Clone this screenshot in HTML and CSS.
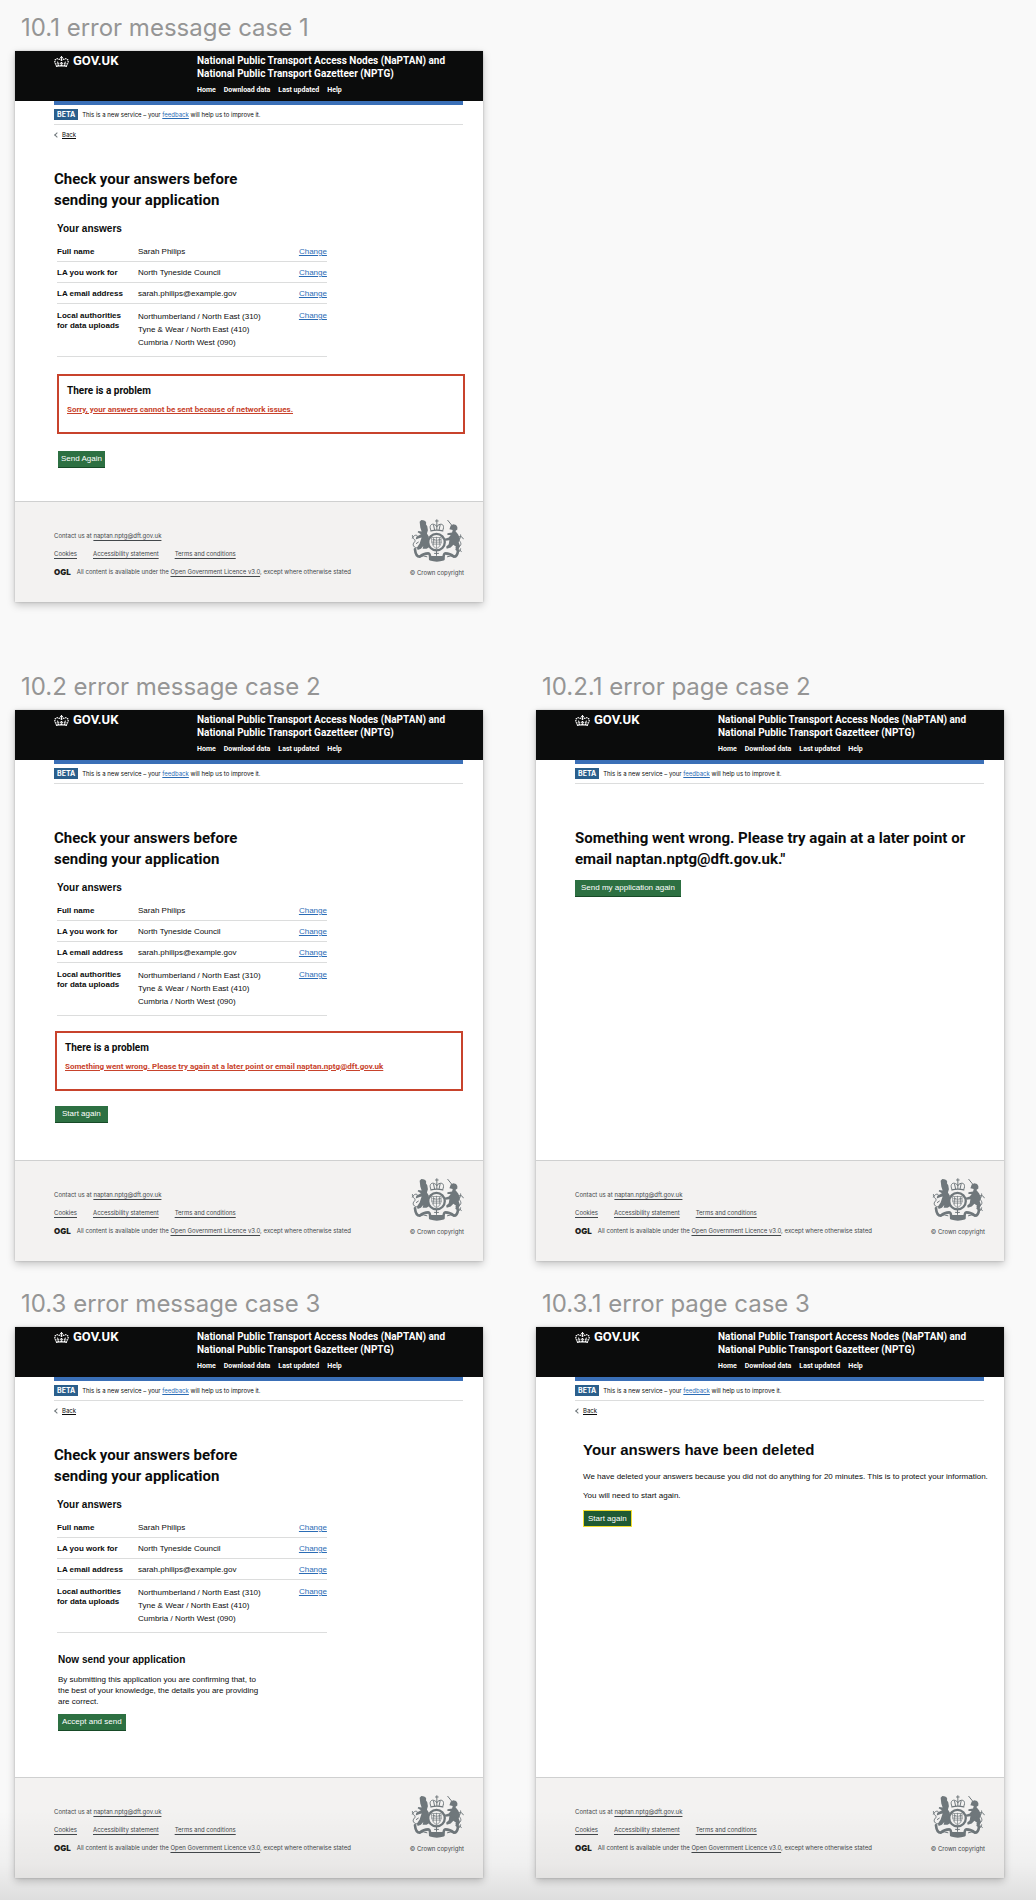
FILE: index.html
```html
<!DOCTYPE html>
<html lang="en">

<head>
    <meta charset="UTF-8">
    <meta name="viewport" content="width=device-width, initial-scale=1.0">
    <title>Error messages</title>
    <link rel="stylesheet" href="styles.css">
</head>

<body>
    <!-- shared icons -->
    <svg class="sprite" aria-hidden="true">
        <symbol id="crown" viewBox="0 0 132 97">
            <path fill="currentColor" fill-rule="evenodd" d="M25 30.2c3.5 1.5 7.7-.2 9.1-3.7 1.5-3.6-.2-7.8-3.9-9.2-3.6-1.4-7.6.3-9.1 3.9-1.4 3.5.3 7.5 3.9 9zM9 39.5c3.6 1.5 7.8-.2 9.2-3.7 1.5-3.6-.2-7.8-3.9-9.1-3.6-1.5-7.6.2-9.1 3.8-1.4 3.5.3 7.5 3.8 9zM4.4 57.2c3.5 1.5 7.7-.2 9.1-3.8 1.5-3.6-.2-7.7-3.9-9.1-3.5-1.5-7.6.3-9.1 3.8-1.4 3.5.3 7.6 3.9 9.1zm38.3-21.4c3.5 1.5 7.7-.2 9.1-3.8 1.5-3.6-.2-7.7-3.9-9.1-3.6-1.5-7.6.3-9.1 3.8-1.3 3.6.4 7.7 3.9 9.1zm64.4-5.6c-3.6 1.5-7.8-.2-9.1-3.7-1.5-3.6.2-7.8 3.8-9.2 3.6-1.4 7.7.3 9.2 3.9 1.3 3.5-.4 7.5-3.9 9zm15.9 9.3c-3.6 1.5-7.7-.2-9.1-3.7-1.5-3.6.2-7.8 3.7-9.1 3.6-1.5 7.7.2 9.2 3.8 1.5 3.5-.3 7.5-3.8 9zm4.7 17.7c-3.6 1.5-7.8-.2-9.2-3.8-1.5-3.6.2-7.7 3.9-9.1 3.6-1.5 7.7.3 9.2 3.8 1.3 3.5-.4 7.6-3.9 9.1zM89.3 35.8c-3.6 1.5-7.8-.2-9.2-3.8-1.4-3.6.2-7.7 3.9-9.1 3.6-1.5 7.7.3 9.2 3.8 1.4 3.6-.3 7.7-3.9 9.1zM69.7 17.7l8.9 4.7V9.3l-8.9 2.8c-.2-.3-.5-.6-.9-.9L72.4 0H59.6l3.5 11.2c-.3.3-.6.5-.9.9l-8.8-2.8v13.1l8.8-4.7c.3.3.6.7.9.9l-5 15.4v.1c-.2.8-.4 1.6-.4 2.4 0 4.1 3.1 7.5 7 8.1h.2c.3 0 .7.1 1 .1.4 0 .7 0 1-.1h.2c4-.6 7.1-4.1 7.1-8.1 0-.8-.1-1.7-.4-2.4V34l-5.1-15.4c.4-.2.7-.6 1-.9zM66 92.8c16.9 0 32.8 1.1 47.1 3.2 4-16.9 8.9-26.7 14-33.5l-9.6-3.4c1 4.9 1.1 7.2 0 10.2-1.5-1.4-3-4.3-4.2-8.7L108.6 76c2.8-2 5-3.2 7.5-3.3-4.4 9.4-10 11.9-13.6 11.2-4.3-.8-6.3-4.6-5.6-7.9 1-4.7 5.7-5.9 8-.5 4.3-8.7-3-11.4-7.6-8.8 7.1-7.2 7.9-13.5 2.1-21.1-8 6.1-8.1 12.3-4.5 20.8-4.7-5.4-12.1-2.5-9.5 6.2 3.4-5.2 7.9-2 7.2 3.1-.6 4.3-6.4 7.8-13.5 7.2-10.3-.9-10.9-8-11.2-13.8 2.5-.5 7.1 1.8 11 7.3L80.2 60c-4.1 4.4-8 5.3-12.3 5.4 1.4-4.4 8-11.6 8-11.6H55.5s6.4 7.2 7.9 11.6c-4.2-.1-8-1-12.3-5.4l1.4 16.4c3.9-5.5 8.5-7.7 10.9-7.3-.3 5.8-.9 12.8-11.1 13.8-7.2.6-12.9-2.9-13.5-7.2-.7-5 3.8-8.3 7.1-3.1 2.7-8.7-4.6-11.6-9.4-6.2 3.7-8.5 3.6-14.7-4.6-20.8-5.8 7.6-5 13.9 2.2 21.1-4.7-2.6-11.9.1-7.7 8.8 2.3-5.5 7.1-4.2 8.1.5.7 3.3-1.3 7.1-5.7 7.9-3.5.7-9-1.8-13.5-11.2 2.5.1 4.7 1.3 7.5 3.3l-4.7-15.4c-1.2 4.4-2.7 7.2-4.3 8.7-1.1-3-.9-5.3 0-10.2l-9.5 3.4c5 6.9 9.9 16.7 14 33.5 14.8-2.1 30.8-3.2 47.7-3.2z" />
        </symbol>
        <symbol id="crest" viewBox="0 0 160 130">
            <g fill="none" stroke="#6f777b" stroke-linecap="round">
                <!-- crown -->
                <path stroke-width="3" d="M78 2v10M74 6h8M60 34c-6-12 0-20 8-18 5 1 9 4 10 8 1-4 5-7 10-8 8-2 14 6 8 18M68 18l3 14M88 18l-3 14M78 14v18" />
                <path stroke-width="4" d="M60 36q18-5 36 0" />
                <!-- garter and shield -->
                <circle cx="77" cy="70" r="25" stroke-width="7" />
                <path stroke-width="2" d="M63 56h28v16q-2 12-14 18q-12-6-14-18zM77 55v34M63 70h28M68 58v20M72 62h-6M84 62h5M86 58v20M68 64h20M70 76h14" />
                <!-- lion tail -->
                <path stroke-width="3" d="M22 88c-14 0-20-10-12-18 8-7-8-10-6-20M4 58c4-10 14-12 16-6M16 74l6-4" />
                <!-- unicorn tail and chain -->
                <path stroke-width="3" d="M136 86c14 0 18-10 12-18-6-6 4-10 2-20M158 60c-6-10-12-10-14-4M138 96c6 6 12 2 12-6M144 92l8 6" />
                <!-- horn -->
                <path stroke-width="3" d="M111 4l13 16" />
                <!-- ribbon -->
                <path stroke-width="8" stroke-linejoin="round" d="M12 92q2 22 14 22q12-10 26-10q6 0 6 18q20 6 40 0q0-18 6-18q14 0 26 10q10 0 12-18" />
                <path stroke-width="3" d="M26 112q12-2 22 2M132 112q-12-2-22 2M77 98v12M71 104h12" />
            </g>
            <g fill="#6f777b">
                <path d="M26 8l5-5 6 1 6 2 3 5-1 5 4 6 2 12-3 10 6 10-3 16 6 14-10 6-12 0 2-8-7 8-10 4-2-8 8-12 6-18-8 2-10 4 2-8 14-8-10-6 2-4 10 2-4-12z" />
                <path d="M120 20l8-4 8 2 4 6 0 8-6 4 8 10 6 12-4 12 4 12-6 14-8-2 2-10-8-6-8 8-12 4-2-6 8-8 2-12-12 2-2-6 12-4 6-8-10 0 0-5 14-2 2-8-10-2z" />
                <path d="M56 112h42v10q-21 8-42 0z" />
            </g>
        </symbol>
    </svg>

    <div class="board">
        <div class="row">
            <section>
                <h2 class="frameTitle">10.1 error message case 1</h2>
                <div class="card">
                    <header class="top">
                        <a href="#" class="logo"><svg class="crown"><use href="#crown" /></svg>GOV.UK</a>
                        <div>
                            <p class="service">National Public Transport Access Nodes (NaPTAN) and<br>National Public Transport Gazetteer (NPTG)</p>
                            <nav class="nav"><a href="#">Home</a><a href="#">Download data</a><a href="#">Last updated</a><a href="#">Help</a></nav>
                        </div>
                    </header>
                    <div class="phase"><strong class="tag">BETA</strong><span>This is a new service – your <a href="#">feedback</a> will help us to improve it.</span></div>
                    <div class="backRow"><a href="#" class="back">Back</a></div>
                    <main class="content">
                        <h1>Check your answers before<br>sending your application</h1>
                        <h3 class="subTitle">Your answers</h3>
                        <table class="answers">
                            <tr><th scope="row">Full name</th><td>Sarah Philips</td><td><a href="#">Change</a></td></tr>
                            <tr><th scope="row">LA you work for</th><td>North Tyneside Council</td><td><a href="#">Change</a></td></tr>
                            <tr><th scope="row">LA email address</th><td>sarah.philips@example.gov</td><td><a href="#">Change</a></td></tr>
                            <tr class="areas"><th scope="row">Local authorities<br>for data uploads</th><td>Northumberland / North East (310)<br>Tyne &amp; Wear / North East (410)<br>Cumbria / North West (090)</td><td><a href="#">Change</a></td></tr>
                        </table>
                        <div class="problem problemWide">
                            <h3>There is a problem</h3>
                            <a href="#">Sorry, your answers cannot be sent because of network issues.</a>
                        </div>
                        <button type="button" class="btn btnSend">Send Again</button>
                    </main>
                    <footer class="bottom">
                        <div class="links">
                            <p>Contact us at <a href="#">naptan.nptg@dft.gov.uk</a></p>
                            <p class="linkList"><a href="#">Cookies</a><a href="#">Accessibility statement</a><a href="#">Terms and conditions</a></p>
                            <p class="licence"><b class="ogl">OGL</b><span>All content is available under the <a href="#">Open Government Licence v3.0</a>, except where otherwise stated</span></p>
                        </div>
                        <div class="copyright"><svg class="crest"><use href="#crest" /></svg>© Crown copyright</div>
                    </footer>
                </div>
            </section>
        </div>

        <div class="row rowSecond">
            <section>
                <h2 class="frameTitle">10.2 error message case 2</h2>
                <div class="card">
                    <header class="top">
                        <a href="#" class="logo"><svg class="crown"><use href="#crown" /></svg>GOV.UK</a>
                        <div>
                            <p class="service">National Public Transport Access Nodes (NaPTAN) and<br>National Public Transport Gazetteer (NPTG)</p>
                            <nav class="nav"><a href="#">Home</a><a href="#">Download data</a><a href="#">Last updated</a><a href="#">Help</a></nav>
                        </div>
                    </header>
                    <div class="phase"><strong class="tag">BETA</strong><span>This is a new service – your <a href="#">feedback</a> will help us to improve it.</span></div>
                    <div class="backRow"></div>
                    <main class="content">
                        <h1>Check your answers before<br>sending your application</h1>
                        <h3 class="subTitle">Your answers</h3>
                        <table class="answers">
                            <tr><th scope="row">Full name</th><td>Sarah Philips</td><td><a href="#">Change</a></td></tr>
                            <tr><th scope="row">LA you work for</th><td>North Tyneside Council</td><td><a href="#">Change</a></td></tr>
                            <tr><th scope="row">LA email address</th><td>sarah.philips@example.gov</td><td><a href="#">Change</a></td></tr>
                            <tr class="areas"><th scope="row">Local authorities<br>for data uploads</th><td>Northumberland / North East (310)<br>Tyne &amp; Wear / North East (410)<br>Cumbria / North West (090)</td><td><a href="#">Change</a></td></tr>
                        </table>
                        <div class="problem">
                            <h3>There is a problem</h3>
                            <a href="#">Something went wrong. Please try again at a later point or email naptan.nptg@dft.gov.uk</a>
                        </div>
                        <button type="button" class="btn btnStart">Start again</button>
                    </main>
                    <footer class="bottom">
                        <div class="links">
                            <p>Contact us at <a href="#">naptan.nptg@dft.gov.uk</a></p>
                            <p class="linkList"><a href="#">Cookies</a><a href="#">Accessibility statement</a><a href="#">Terms and conditions</a></p>
                            <p class="licence"><b class="ogl">OGL</b><span>All content is available under the <a href="#">Open Government Licence v3.0</a>, except where otherwise stated</span></p>
                        </div>
                        <div class="copyright"><svg class="crest"><use href="#crest" /></svg>© Crown copyright</div>
                    </footer>
                </div>
            </section>
            <section>
                <h2 class="frameTitle">10.2.1 error page case 2</h2>
                <div class="card">
                    <header class="top">
                        <a href="#" class="logo"><svg class="crown"><use href="#crown" /></svg>GOV.UK</a>
                        <div>
                            <p class="service">National Public Transport Access Nodes (NaPTAN) and<br>National Public Transport Gazetteer (NPTG)</p>
                            <nav class="nav"><a href="#">Home</a><a href="#">Download data</a><a href="#">Last updated</a><a href="#">Help</a></nav>
                        </div>
                    </header>
                    <div class="phase"><strong class="tag">BETA</strong><span>This is a new service – your <a href="#">feedback</a> will help us to improve it.</span></div>
                    <div class="backRow"></div>
                    <main class="content">
                        <h1>Something went wrong. Please try again at a later point or<br>email naptan.nptg@dft.gov.uk."</h1>
                        <button type="button" class="btn btnResend">Send my application again</button>
                    </main>
                    <footer class="bottom">
                        <div class="links">
                            <p>Contact us at <a href="#">naptan.nptg@dft.gov.uk</a></p>
                            <p class="linkList"><a href="#">Cookies</a><a href="#">Accessibility statement</a><a href="#">Terms and conditions</a></p>
                            <p class="licence"><b class="ogl">OGL</b><span>All content is available under the <a href="#">Open Government Licence v3.0</a>, except where otherwise stated</span></p>
                        </div>
                        <div class="copyright"><svg class="crest"><use href="#crest" /></svg>© Crown copyright</div>
                    </footer>
                </div>
            </section>
        </div>

        <div class="row rowThird">
            <section>
                <h2 class="frameTitle">10.3 error message case 3</h2>
                <div class="card">
                    <header class="top">
                        <a href="#" class="logo"><svg class="crown"><use href="#crown" /></svg>GOV.UK</a>
                        <div>
                            <p class="service">National Public Transport Access Nodes (NaPTAN) and<br>National Public Transport Gazetteer (NPTG)</p>
                            <nav class="nav"><a href="#">Home</a><a href="#">Download data</a><a href="#">Last updated</a><a href="#">Help</a></nav>
                        </div>
                    </header>
                    <div class="phase"><strong class="tag">BETA</strong><span>This is a new service – your <a href="#">feedback</a> will help us to improve it.</span></div>
                    <div class="backRow"><a href="#" class="back">Back</a></div>
                    <main class="content">
                        <h1>Check your answers before<br>sending your application</h1>
                        <h3 class="subTitle">Your answers</h3>
                        <table class="answers">
                            <tr><th scope="row">Full name</th><td>Sarah Philips</td><td><a href="#">Change</a></td></tr>
                            <tr><th scope="row">LA you work for</th><td>North Tyneside Council</td><td><a href="#">Change</a></td></tr>
                            <tr><th scope="row">LA email address</th><td>sarah.philips@example.gov</td><td><a href="#">Change</a></td></tr>
                            <tr class="areas"><th scope="row">Local authorities<br>for data uploads</th><td>Northumberland / North East (310)<br>Tyne &amp; Wear / North East (410)<br>Cumbria / North West (090)</td><td><a href="#">Change</a></td></tr>
                        </table>
                        <div class="confirm">
                            <h3>Now send your application</h3>
                            <p>By submitting this application you are confirming that, to<br>the best of your knowledge, the details you are providing<br>are correct.</p>
                            <button type="button" class="btn">Accept and send</button>
                        </div>
                    </main>
                    <footer class="bottom">
                        <div class="links">
                            <p>Contact us at <a href="#">naptan.nptg@dft.gov.uk</a></p>
                            <p class="linkList"><a href="#">Cookies</a><a href="#">Accessibility statement</a><a href="#">Terms and conditions</a></p>
                            <p class="licence"><b class="ogl">OGL</b><span>All content is available under the <a href="#">Open Government Licence v3.0</a>, except where otherwise stated</span></p>
                        </div>
                        <div class="copyright"><svg class="crest"><use href="#crest" /></svg>© Crown copyright</div>
                    </footer>
                </div>
            </section>
            <section>
                <h2 class="frameTitle">10.3.1 error page case 3</h2>
                <div class="card">
                    <header class="top">
                        <a href="#" class="logo"><svg class="crown"><use href="#crown" /></svg>GOV.UK</a>
                        <div>
                            <p class="service">National Public Transport Access Nodes (NaPTAN) and<br>National Public Transport Gazetteer (NPTG)</p>
                            <nav class="nav"><a href="#">Home</a><a href="#">Download data</a><a href="#">Last updated</a><a href="#">Help</a></nav>
                        </div>
                    </header>
                    <div class="phase"><strong class="tag">BETA</strong><span>This is a new service – your <a href="#">feedback</a> will help us to improve it.</span></div>
                    <div class="backRow"><a href="#" class="back">Back</a></div>
                    <main class="content deleted">
                        <h1>Your answers have been deleted</h1>
                        <p>We have deleted your answers because you did not do anything for 20 minutes. This is to protect your information.</p>
                        <p>You will need to start again.</p>
                        <button type="button" class="btn btnFocus">Start again</button>
                    </main>
                    <footer class="bottom">
                        <div class="links">
                            <p>Contact us at <a href="#">naptan.nptg@dft.gov.uk</a></p>
                            <p class="linkList"><a href="#">Cookies</a><a href="#">Accessibility statement</a><a href="#">Terms and conditions</a></p>
                            <p class="licence"><b class="ogl">OGL</b><span>All content is available under the <a href="#">Open Government Licence v3.0</a>, except where otherwise stated</span></p>
                        </div>
                        <div class="copyright"><svg class="crest"><use href="#crest" /></svg>© Crown copyright</div>
                    </footer>
                </div>
            </section>
        </div>
    </div>
</body>

</html>
```
FILE: styles.css
```css
* {
    box-sizing: border-box;
    margin: 0;
    padding: 0;
}

body {
    background-color: #f9f9f9;
    font: 8px/10px "Liberation Sans", Arial, sans-serif;
    color: #0b0c0c;
}

.sprite {
    display: none;
}

/* -------------------- board -------------------- */
.board {
    position: relative;
    padding: 0 32px 22px 15px;
}

/* fade at the bottom edge, over the cards */
.board::after {
    content: '';
    position: absolute;
    left: 0;
    right: 0;
    bottom: 0;
    height: 90px;
    background: linear-gradient(rgba(0, 0, 0, 0), rgba(0, 0, 0, .04) 60%, rgba(0, 0, 0, .11));
    pointer-events: none;
}

.row {
    display: grid;
    grid-template-columns: minmax(0, 1fr) minmax(0, 1fr);
    column-gap: 53px;
}

.rowSecond {
    margin-top: 57px;
}

.rowThird {
    margin-top: 15px;
}

.frameTitle {
    padding: 4px 0 0 6px;
    font: 400 24px/47px Inter, sans-serif;
    color: #959595;
}

.card {
    display: flex;
    flex-direction: column;
    min-height: 551px;
    background-color: #fff;
    box-shadow: 0 0 2px rgba(0, 0, 0, .2), 0 3px 8px rgba(0, 0, 0, .22);
}

/* -------------------- header -------------------- */
.top {
    display: grid;
    grid-template-columns: 143px 1fr;
    height: 50px;
    padding: 3px 20px 0 39px;
    background-color: #0b0c0c;
    font-family: Roboto, sans-serif;
    font-weight: 700;
    color: #fff;
}

.top a {
    color: #fff;
    text-decoration: none;
}

.logo {
    display: flex;
    align-items: center;
    gap: 4px;
    height: 14px;
    font-size: 13px;
}

.crown {
    width: 15px;
    height: 11px;
}

.service {
    font-size: 10px;
    line-height: 13px;
    white-space: nowrap;
}

.nav {
    display: flex;
    gap: 8px;
    margin-top: 5px;
    font-size: 7px;
}

.phase {
    display: flex;
    align-items: center;
    gap: 4px;
    height: 24px;
    margin: 0 20px 0 39px;
    border-top: 4px solid #3a6fb7;
    border-bottom: 1px solid #dcdddd;
    font: 6px/10px Inter, sans-serif;
}

.tag {
    padding: 0 3px;
    background-color: #2b5f8c;
    font: 700 7px/11px Inter, sans-serif;
    color: #fff;
}

.phase a,
.answers a {
    color: #2b6cb5;
}

.backRow {
    height: 20px;
    margin-left: 39px;
    padding-top: 5px;
    font-family: Inter, sans-serif;
    font-size: 6px;
}

.back {
    display: flex;
    align-items: center;
    gap: 3px;
    color: #0b0c0c;
}

.back::before {
    content: '';
    width: 3px;
    height: 3px;
    margin-left: 1px;
    border-left: 1px solid #6f777b;
    border-bottom: 1px solid #6f777b;
    transform: rotate(45deg);
}

/* -------------------- content -------------------- */
.content {
    flex: 1;
    margin: 24px 20px 0 39px;
}

.content h1 {
    font: 700 15px/21px Roboto, sans-serif;
    white-space: nowrap;
}

.content h3 {
    font-size: 10px;
    line-height: 12px;
}

.content .subTitle {
    margin: 12px 0 6px 3px;
}

.answers {
    width: 66%;
    margin-left: 3px;
    border-collapse: collapse;
    text-align: left;
}

.answers th,
.answers td {
    padding: 6px 0 4px;
    border-bottom: 1px solid #dcdddd;
    vertical-align: top;
    white-space: nowrap;
}

.answers th {
    width: 81px;
}

.answers td:last-child {
    text-align: right;
}

.answers .areas th,
.answers .areas td {
    padding: 7px 0;
}

.answers .areas td:nth-child(2) {
    padding-top: 6px;
    line-height: 13px;
}

.problem {
    margin: 15px 0 15px 1px;
    padding: 9px 9px 17px 8px;
    border: 2px solid #c8432c;
    font-family: Roboto, sans-serif;
}

.problemWide {
    margin: 17px -2px 17px 3px;
}

.problem a {
    display: block;
    margin-top: 8px;
    font-weight: 700;
    color: #c8432c;
}

.btn {
    display: block;
    height: 17px;
    padding: 0 4px;
    background-color: #2d7042;
    border: 0;
    border-bottom: 1px solid #174a27;
    font: 8px/16px "Liberation Sans", Arial, sans-serif;
    color: #fff;
}

.btnSend {
    margin-left: 4px;
    padding: 0 3px;
}

.btnStart {
    margin-left: 1px;
    padding: 0 7px;
}

.btnResend {
    margin-top: 10px;
    padding: 0 6px;
}

.confirm {
    margin: 21px 0 0 4px;
}

.confirm p {
    margin: 8px 0 7px;
    line-height: 11px;
}

.deleted {
    margin: 18px 10px 0 47px;
}

.content.deleted h1 {
    margin-bottom: 12px;
    font-family: "Liberation Sans", Arial, sans-serif;
}

.deleted p {
    margin-bottom: 9px;
    white-space: nowrap;
}

.btnFocus {
    background-color: #1f5a33;
    border: 1px solid #f2dd2e;
    line-height: 15px;
}

/* -------------------- footer -------------------- */
.bottom {
    display: flex;
    justify-content: space-between;
    height: 101px;
    padding: 17px 19px 0 39px;
    background-color: #f3f2f1;
    border-top: 1px solid #cfd0d0;
    font: 6px/10px Inter, sans-serif;
    color: #43484b;
}

.bottom a {
    color: #43484b;
    text-underline-offset: 2px;
}

.links {
    display: flex;
    flex-direction: column;
    gap: 8px;
    padding-top: 12px;
}

.linkList {
    display: flex;
    gap: 16px;
}

.licence {
    display: flex;
    gap: 6px;
}

.ogl {
    font-size: 8px;
    font-weight: 900;
    color: #1c1e20;
}

.copyright {
    display: flex;
    flex-direction: column;
    align-items: flex-end;
    gap: 6px;
}

.crest {
    width: 53px;
    height: 43px;
}
```
